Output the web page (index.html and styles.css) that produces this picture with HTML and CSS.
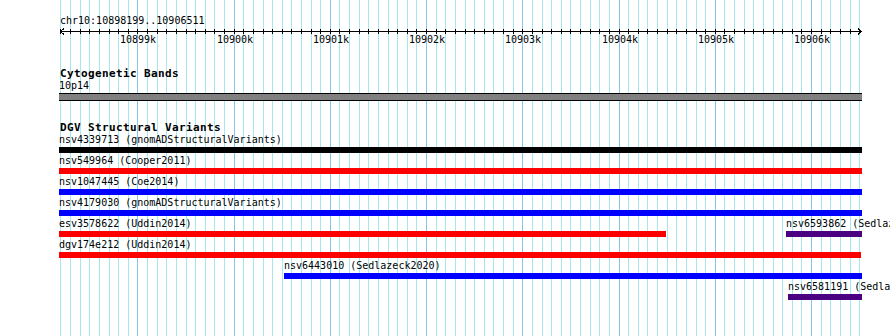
FILE: index.html
```html
<!DOCTYPE html>
<html lang="en">
<head>
  <meta charset="UTF-8">
  <title>chr10:10898199..10906511</title>
  <link rel="stylesheet" href="styles.css">
</head>
<body>
  <div class="panel">
    <!-- grid lines are added by script.js -->
    <div class="grid" id="grid"></div>

    <div class="content">
      <!-- Ruler -->
      <div class="ruler">
        <div class="ruler-title">chr10:10898199..10906511</div>
        <svg class="ruler-axis" id="axis" width="804" height="7"></svg>
        <div class="ruler-labels" id="ruler-labels"></div>
      </div>

      <!-- Cytogenetic bands -->
      <div class="track">
        <div class="track-title">Cytogenetic Bands</div>
        <div class="feature-row">
          <div class="feature" style="left: 0; width: 803px;">
            <div class="feature-label">10p14</div>
            <div class="band"></div>
          </div>
        </div>
      </div>

      <!-- DGV structural variants -->
      <div class="track track-dgv">
        <div class="track-title">DGV Structural Variants</div>

        <div class="feature-row">
          <div class="feature" style="left: 0; width: 803px;">
            <div class="feature-label">nsv4339713 (gnomADStructuralVariants)</div>
            <div class="bar black"></div>
          </div>
        </div>

        <div class="feature-row">
          <div class="feature" style="left: 0; width: 803px;">
            <div class="feature-label">nsv549964 (Cooper2011)</div>
            <div class="bar red"></div>
          </div>
        </div>

        <div class="feature-row">
          <div class="feature" style="left: 0; width: 803px;">
            <div class="feature-label">nsv1047445 (Coe2014)</div>
            <div class="bar blue"></div>
          </div>
        </div>

        <div class="feature-row">
          <div class="feature" style="left: 0; width: 803px;">
            <div class="feature-label">nsv4179030 (gnomADStructuralVariants)</div>
            <div class="bar blue"></div>
          </div>
        </div>

        <div class="feature-row">
          <div class="feature" style="left: 0; width: 607px;">
            <div class="feature-label">esv3578622 (Uddin2014)</div>
            <div class="bar red"></div>
          </div>
          <div class="feature" style="left: 727px; width: 76px;">
            <div class="feature-label">nsv6593862 (Sedlazeck2020)</div>
            <div class="bar purple"></div>
          </div>
        </div>

        <div class="feature-row">
          <div class="feature" style="left: 0; width: 802px;">
            <div class="feature-label">dgv174e212 (Uddin2014)</div>
            <div class="bar red"></div>
          </div>
        </div>

        <div class="feature-row">
          <div class="feature" style="left: 225px; width: 578px;">
            <div class="feature-label">nsv6443010 (Sedlazeck2020)</div>
            <div class="bar blue"></div>
          </div>
        </div>

        <div class="feature-row">
          <div class="feature" style="left: 729px; width: 74px;">
            <div class="feature-label">nsv6581191 (Sedlazeck2020)</div>
            <div class="bar purple"></div>
          </div>
        </div>
      </div>
    </div>
  </div>

  <script src="script.js"></script>
</body>
</html>
```

FILE: styles.css
```css
/* Page */
body {
  margin: 0;
  overflow: hidden;
  background: #fff;
  color: #000;
  font-family: "DejaVu Sans Mono", "Liberation Mono", monospace;
  font-size: 10px;
}

/* Whole image panel */
.panel {
  position: relative;
  width: 890px;
  height: 336px;
  overflow: hidden;
}

/* Vertical grid behind the tracks */
.grid {
  position: absolute;
  top: 0;
  left: 0;
  right: 0;
  bottom: 0;
}

.gridline {
  position: absolute;
  top: 0;
  bottom: 0;
  width: 1px;
  background: #a6e8f0;
}

.gridline.major {
  background: #86c6ec;
}

/* Tracks sit on top of the grid */
.content {
  position: relative;
  padding-left: 59px;
}

/* Ruler */
.ruler {
  padding-top: 15px;
}

.ruler-title {
  line-height: 12px;
  padding-left: 1px;
}

.ruler-axis {
  display: block;
  margin-top: 1px;
}

.ruler-labels {
  position: relative;
  height: 12px;
  margin-top: -1px;
}

.ruler-label {
  position: absolute;
  top: 0;
  line-height: 12px;
  transform: translateX(-50%);
}

/* Tracks */
.track {
  margin-top: 22px;
}

.track-dgv {
  margin-top: 21px;
}

.track-title {
  font-size: 11px;
  font-weight: bold;
  letter-spacing: 0.38px;
  line-height: 12px;
  padding-left: 1px;
}

.feature-row {
  position: relative;
  height: 21px;
}

.feature {
  position: absolute;
  top: 0;
}

.feature-label {
  line-height: 12px;
  white-space: nowrap;
}

.band {
  height: 6px;
  margin-top: 1px;
  background: #808080;
  border-top: 1px solid #000;
  border-bottom: 1px solid #000;
}

.bar {
  height: 6px;
  margin-top: 1px;
}

.bar.black {
  background: #000;
}

.bar.red {
  background: #ff0000;
}

.bar.blue {
  background: #0000ff;
}

.bar.purple {
  background: #4b0082;
}
```

FILE: script.js
```js
// Visible region chr10:10898199..10906511
var START = 10898199;
var END = 10906511;
var SCALE = 0.09624; // pixels per bp
var ORIGIN = 59;     // left edge of the tracks

function xOf(bp) {
  return Math.round(60.3 + (bp - START) * SCALE);
}

var grid = document.getElementById('grid');
var axis = document.getElementById('axis');
var labels = document.getElementById('ruler-labels');

// axis line and the two arrow heads
var d = 'M1 3.5H803M5 0.5L1.5 3.5L5 6.5M799 0.5L802.5 3.5L799 6.5';

for (var bp = 10898200; bp <= END; bp += 100) {
  var x = xOf(bp);
  var major = bp % 1000 === 0;

  var line = document.createElement('div');
  line.className = major ? 'gridline major' : 'gridline';
  line.style.left = x + 'px';
  grid.appendChild(line);

  d += 'M' + (x - ORIGIN + 0.5) + ' 1V6';

  if (major) {
    var label = document.createElement('span');
    label.className = 'ruler-label';
    label.textContent = (bp / 1000) + 'k';
    label.style.left = (x - ORIGIN + 1) + 'px';
    labels.appendChild(label);
  }
}

var path = document.createElementNS('http://www.w3.org/2000/svg', 'path');
path.setAttribute('d', d);
path.setAttribute('stroke', '#000');
path.setAttribute('fill', 'none');
path.setAttribute('shape-rendering', 'crispEdges');
axis.appendChild(path);
```
